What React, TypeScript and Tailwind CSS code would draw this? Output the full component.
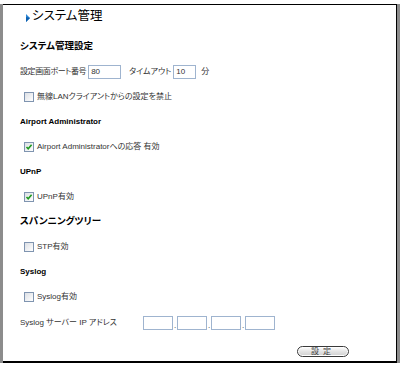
import React from "react";

const font = "font-['Liberation_Sans','Noto_Sans_CJK_JP',sans-serif] [font-feature-settings:'palt']";

function Check({ checked }: { checked?: boolean }) {
  return (
    <span className="relative flex h-[10px] w-[10px] shrink-0 items-center justify-center border border-[#7f94b0] bg-gradient-to-br from-[#dcdfe4] to-white">
      {checked && (
        <svg width="8" height="8" viewBox="0 0 8 8">
          <path d="M1.5 4 L3.2 5.8 L6.6 1.8" fill="none" stroke="#1f9a1f" strokeWidth="1.6" />
        </svg>
      )}
    </span>
  );
}

function Heading({ children, big }: { children: React.ReactNode; big?: boolean }) {
  return (
    <div className={`flex h-[25px] items-center pl-[17px] font-bold text-black ${big ? "text-[9.5px]" : "text-[8px]"}`}>
      {children}
    </div>
  );
}

function CheckRow({ label, checked }: { label: string; checked?: boolean }) {
  return (
    <div className="flex h-[25px] items-center gap-[3px] pl-[21px] text-[8px] text-[#333]">
      <Check checked={checked} />
      <span>{label}</span>
    </div>
  );
}

function Field({ value, w }: { value?: string; w: string }) {
  return (
    <span className={`flex h-[14px] ${w} items-center border border-[#9fb4cf] bg-white pl-[2px] text-[8px] text-[#333]`}>
      {value}
    </span>
  );
}

export default function App() {
  return (
    <div className={`w-[401px] h-[369px] bg-white pt-[4px] ${font}`}>
      <div className="w-[400px] border-x-[3px] border-x-[#8c8c8c]">
        <div className="flex h-[359px] flex-col border-t border-r border-b-2 border-black">
          <div className="flex h-[22px] items-center pl-[23px] text-[12.5px] text-black">
            <svg width="4" height="8" viewBox="0 0 4 8" className="mr-[2px] mt-[3px]">
              <polygon points="0,0 4,4 0,8" fill="#2b86d6" />
              <polygon points="0,3 4,4 0,8" fill="#0d5fae" />
            </svg>
            <span>システム管理</span>
          </div>
          <div className="h-[7px]" />
          <Heading big>システム管理設定</Heading>
          <div className="flex h-[25px] items-center pl-[17px] text-[8px] text-[#333]">
            <span className="tracking-[-0.4px]">設定画面ポート番号</span>
            <span className="ml-[2px]"><Field value="80" w="w-[33px]" /></span>
            <span className="ml-[8px]">タイムアウト</span>
            <span className="ml-[2px]"><Field value="10" w="w-[23px]" /></span>
            <span className="ml-[5px]">分</span>
          </div>
          <CheckRow label="無線LANクライアントからの設定を禁止" />
          <Heading>Airport Administrator</Heading>
          <CheckRow label="Airport Administratorへの応答 有効" checked />
          <Heading>UPnP</Heading>
          <CheckRow label="UPnP有効" checked />
          <Heading big>スパンニングツリー</Heading>
          <CheckRow label="STP有効" />
          <Heading>Syslog</Heading>
          <CheckRow label="Syslog有効" />
          <div className="flex h-[27px] items-center pl-[17px] text-[8px] text-[#333]">
            <span className="w-[123px]">Syslog サーバー IP アドレス</span>
            <div className="flex items-end">
              <Field w="w-[30px]" />
              <span className="w-[4px] text-center leading-[8px]">.</span>
              <Field w="w-[30px]" />
              <span className="w-[4px] text-center leading-[8px]">.</span>
              <Field w="w-[30px]" />
              <span className="w-[4px] text-center leading-[8px]">.</span>
              <Field w="w-[30px]" />
            </div>
          </div>
          <div className="flex flex-1 items-end justify-end pb-[4px] pr-[47px]">
            <span className="flex h-[11px] w-[52px] items-center justify-center rounded-full border border-[#3a3a3a] bg-gradient-to-b from-white via-[#e4e4e4] to-[#cfcfcf] text-[8px] tracking-[4px] text-[#444] shadow-[inset_0_0_0_1px_#fff]">
              設定
            </span>
          </div>
        </div>
      </div>
    </div>
  );
}
